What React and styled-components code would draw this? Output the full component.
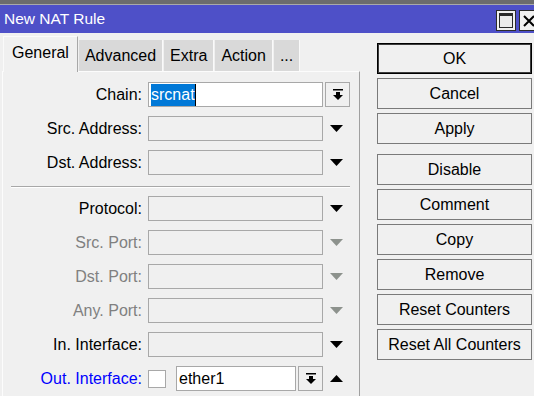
import React from "react";
import styled, { createGlobalStyle } from "styled-components";

const GlobalStyle = createGlobalStyle`
  html, body {
    margin: 0;
    padding: 0;
    background: #f0f0f0;
  }
  body {
    font-family: "Liberation Sans", Arial, sans-serif;
    font-size: 16px;
    color: #000;
  }
`;

const Window = styled.div`
  width: 534px;
  height: 396px;
  overflow: hidden;
  display: flex;
  flex-direction: column;
  background: #f0f0f0;
`;

const TopStrip = styled.div`
  height: 4px;
  background: #6c6c6c;
  border-bottom: 1px solid #a9a9a9;
`;

const TitleBar = styled.div`
  height: 28px;
  background: #4e50c8;
  display: flex;
  align-items: center;
  padding-left: 4px;
  color: #fff;
  font-size: 15.5px;
`;

const Title = styled.span`
  flex: 1;
`;

const WinButtons = styled.div`
  display: flex;
  gap: 3px;
  align-self: flex-start;
  margin-top: 5px;
  margin-right: -5px;
`;

const WinButton = styled.div`
  width: 20px;
  height: 21px;
  box-sizing: border-box;
  border: 1px solid #2b2b2b;
  background: #f0f0f0;
  display: flex;
  align-items: center;
  justify-content: center;
`;

const Body = styled.div`
  flex: 1;
  display: flex;
  min-height: 0;
`;

const LeftColumn = styled.div`
  width: 358px;
  margin-left: 2px;
  display: flex;
  flex-direction: column;
`;

const TabBar = styled.div`
  height: 35px;
  margin-top: 3px;
  padding-left: 1px;
  display: flex;
  align-items: flex-end;
  gap: 1px;
  position: relative;
  z-index: 1;
`;

const Tab = styled.div`
  box-sizing: border-box;
  display: flex;
  align-items: center;
  justify-content: center;
  white-space: nowrap;
  ${(p) =>
    p.$active
      ? `
    height: 36px;
    margin-bottom: -1px;
    padding: 0 8px 4px;
    background: #f0f0f0;
    border-top: 1px solid #fafafa;
    border-left: 1px solid #fafafa;
    border-right: 1px solid #a8a8a8;
  `
      : `
    height: 31px;
    padding: 0 6px;
    background: #d9d9d9;
    border-right: 1px solid #fafafa;
  `}
`;

const Panel = styled.div`
  flex: 1;
  border-top: 1px solid #fcfcfc;
  border-left: 1px solid #fcfcfc;
  border-right: 1px solid #a0a0a0;
  padding-top: 10px;
  display: flex;
  flex-direction: column;
  gap: 9px;
`;

const FieldRow = styled.div`
  display: flex;
  align-items: center;
  height: 25px;
`;

const Label = styled.div`
  width: 139px;
  margin-right: 6px;
  text-align: right;
  white-space: nowrap;
  color: ${(p) =>
    p.$tone === "muted" ? "#808080" : p.$tone === "link" ? "#0000ff" : "#000"};
`;

const Input = styled.div`
  box-sizing: border-box;
  height: 25px;
  width: ${(p) => p.$width}px;
  border: 1px solid #a8a8a8;
  background: ${(p) => (p.$filled ? "#fff" : "transparent")};
  padding: 0 2px;
  display: flex;
  align-items: center;
  white-space: nowrap;
`;

const Selected = styled.span`
  background: #0078d7;
  color: #fff;
  line-height: 22px;
`;

const Caret = styled.span`
  width: 1px;
  height: 22px;
  background: #000;
`;

const DropButton = styled.div`
  box-sizing: border-box;
  width: 25px;
  height: 25px;
  margin-left: 2px;
  border: 1px solid #a8a8a8;
  background: #f0f0f0;
  display: flex;
  align-items: center;
  justify-content: center;
`;

const ArrowBox = styled.div`
  width: 27px;
  height: 25px;
  display: flex;
  align-items: center;
  justify-content: center;
`;

const CheckBox = styled.div`
  box-sizing: border-box;
  width: 18px;
  height: 18px;
  margin-right: 10px;
  border: 1px solid #a8a8a8;
  background: #fff;
`;

const Separator = styled.div`
  height: 0;
  margin: 2px 9px -1px 8px;
  border-top: 1px solid #a8a8a8;
  border-bottom: 1px solid #fff;
`;

const ButtonColumn = styled.div`
  width: 155px;
  margin-left: 17px;
  margin-top: 10px;
  display: flex;
  flex-direction: column;
  gap: 4px;
`;

const ActionButton = styled.div`
  box-sizing: border-box;
  height: 31px;
  margin-top: ${(p) => (p.$groupStart ? "6px" : "0")};
  border: 1px solid ${(p) => (p.$default ? "#000" : "#7a7a7a")};
  box-shadow: ${(p) => (p.$default ? "inset 0 0 0 1px #3c3c3c" : "none")};
  background: #f0f0f0;
  display: flex;
  align-items: center;
  justify-content: center;
  white-space: nowrap;
`;

const Triangle = ({ up, muted }) => (
  <svg width="13" height="7" viewBox="0 0 13 7">
    <polygon
      points={up ? "0,7 13,7 6.5,0" : "0,0 13,0 6.5,7"}
      fill={muted ? "#8d928d" : "#000"}
    />
  </svg>
);

const DropIcon = () => (
  <svg width="10" height="11" viewBox="0 0 10 11">
    <rect x="0" y="0" width="10" height="1.5" fill="#000" />
    <rect x="3" y="3" width="4" height="3" fill="#000" />
    <polygon points="0,6 10,6 5,11" fill="#000" />
  </svg>
);

const MaximizeIcon = () => (
  <svg width="14" height="15" viewBox="0 0 14 15">
    <rect x="0.5" y="0.5" width="13" height="14" fill="#ececec" stroke="#2b2b2b" />
    <rect x="0" y="0" width="14" height="3" fill="#2b2b2b" />
  </svg>
);

const CloseIcon = () => (
  <svg width="14" height="14" viewBox="0 0 14 14">
    <path d="M2 2 L12 12 M12 2 L2 12" stroke="#000" strokeWidth="2" />
  </svg>
);

const emptyFields = [
  { label: "Protocol:" },
  { label: "Src. Port:", muted: true },
  { label: "Dst. Port:", muted: true },
  { label: "Any. Port:", muted: true },
  { label: "In. Interface:" },
];

const buttons = [
  { text: "OK", isDefault: true },
  { text: "Cancel" },
  { text: "Apply" },
  { text: "Disable", groupStart: true },
  { text: "Comment" },
  { text: "Copy" },
  { text: "Remove" },
  { text: "Reset Counters" },
  { text: "Reset All Counters" },
];

function EmptyField({ label, muted }) {
  return (
    <FieldRow>
      <Label $tone={muted ? "muted" : undefined}>{label}</Label>
      <Input $width={175} />
      <ArrowBox>
        <Triangle muted={muted} />
      </ArrowBox>
    </FieldRow>
  );
}

export default function App() {
  return (
    <Window>
      <GlobalStyle />
      <TopStrip />
      <TitleBar>
        <Title>New NAT Rule</Title>
        <WinButtons>
          <WinButton>
            <MaximizeIcon />
          </WinButton>
          <WinButton>
            <CloseIcon />
          </WinButton>
        </WinButtons>
      </TitleBar>
      <Body>
        <LeftColumn>
          <TabBar>
            <Tab $active>General</Tab>
            <Tab>Advanced</Tab>
            <Tab>Extra</Tab>
            <Tab>Action</Tab>
            <Tab>...</Tab>
          </TabBar>
          <Panel>
            <FieldRow>
              <Label>Chain:</Label>
              <Input $width={175} $filled>
                <Selected>srcnat</Selected>
                <Caret />
              </Input>
              <DropButton>
                <DropIcon />
              </DropButton>
            </FieldRow>
            <EmptyField label="Src. Address:" />
            <EmptyField label="Dst. Address:" />
            <Separator />
            {emptyFields.map((f) => (
              <EmptyField key={f.label} label={f.label} muted={f.muted} />
            ))}
            <FieldRow>
              <Label $tone="link">Out. Interface:</Label>
              <CheckBox />
              <Input $width={120} $filled>
                ether1
              </Input>
              <DropButton>
                <DropIcon />
              </DropButton>
              <ArrowBox>
                <Triangle up />
              </ArrowBox>
            </FieldRow>
          </Panel>
        </LeftColumn>
        <ButtonColumn>
          {buttons.map((b) => (
            <ActionButton
              key={b.text}
              $default={b.isDefault}
              $groupStart={b.groupStart}
            >
              {b.text}
            </ActionButton>
          ))}
        </ButtonColumn>
      </Body>
    </Window>
  );
}
